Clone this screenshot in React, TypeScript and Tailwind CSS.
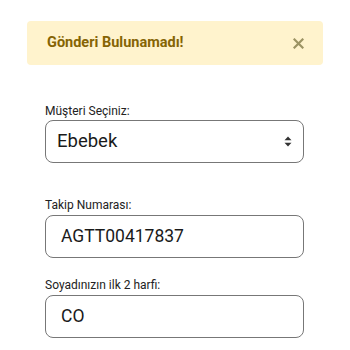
export default function App() {
  return (
    <div className="w-[350px] h-[350px] bg-white overflow-hidden font-['Roboto',sans-serif]">
      <div className="pt-[21px] px-[27px]">
        <div className="h-[44px] rounded-[4px] bg-[#fff3cd] flex items-center justify-between pl-[20px] pr-[19px]">
          <span className="text-[14.5px] font-bold text-[#856404]">Gönderi Bulunamadı!</span>
          <svg width="11" height="11" viewBox="0 0 11 11" className="text-[#9c9363]">
            <path d="M1.5 1.5 L9.5 9.5 M9.5 1.5 L1.5 9.5" stroke="currentColor" strokeWidth="2.2" strokeLinecap="square" />
          </svg>
        </div>
      </div>

      <div className="ml-[45px] w-[259px]">
        <label className="block mt-[39px] text-[12px] leading-[14px] text-[#222]">Müşteri Seçiniz:</label>
        <div className="mt-[2px] h-[43px] border border-[#777] rounded-[8px] flex items-center justify-between pl-[11px] pr-[11px]">
          <span className="text-[18.5px] text-[#1a1a1a]">Ebebek</span>
          <svg width="8" height="11" viewBox="0 0 8 11" className="text-[#333]">
            <path d="M4 0.5 L7.5 4.3 H0.5 Z M4 10.5 L7.5 6.7 H0.5 Z" fill="currentColor" />
          </svg>
        </div>

        <label className="block mt-[35px] text-[12px] leading-[14px] text-[#222]">Takip Numarası:</label>
        <div className="mt-[3px] h-[43px] border border-[#777] rounded-[8px] flex items-center pl-[15px]">
          <span className="text-[17.5px] text-[#1a1a1a]">AGTT00417837</span>
        </div>

        <label className="block mt-[20px] text-[12px] leading-[14px] text-[#222]">Soyadınızın ilk 2 harfi:</label>
        <div className="mt-[3px] h-[43px] border border-[#777] rounded-[8px] flex items-center pl-[15px]">
          <span className="text-[17.5px] text-[#1a1a1a]">CO</span>
        </div>
      </div>
    </div>
  );
}
